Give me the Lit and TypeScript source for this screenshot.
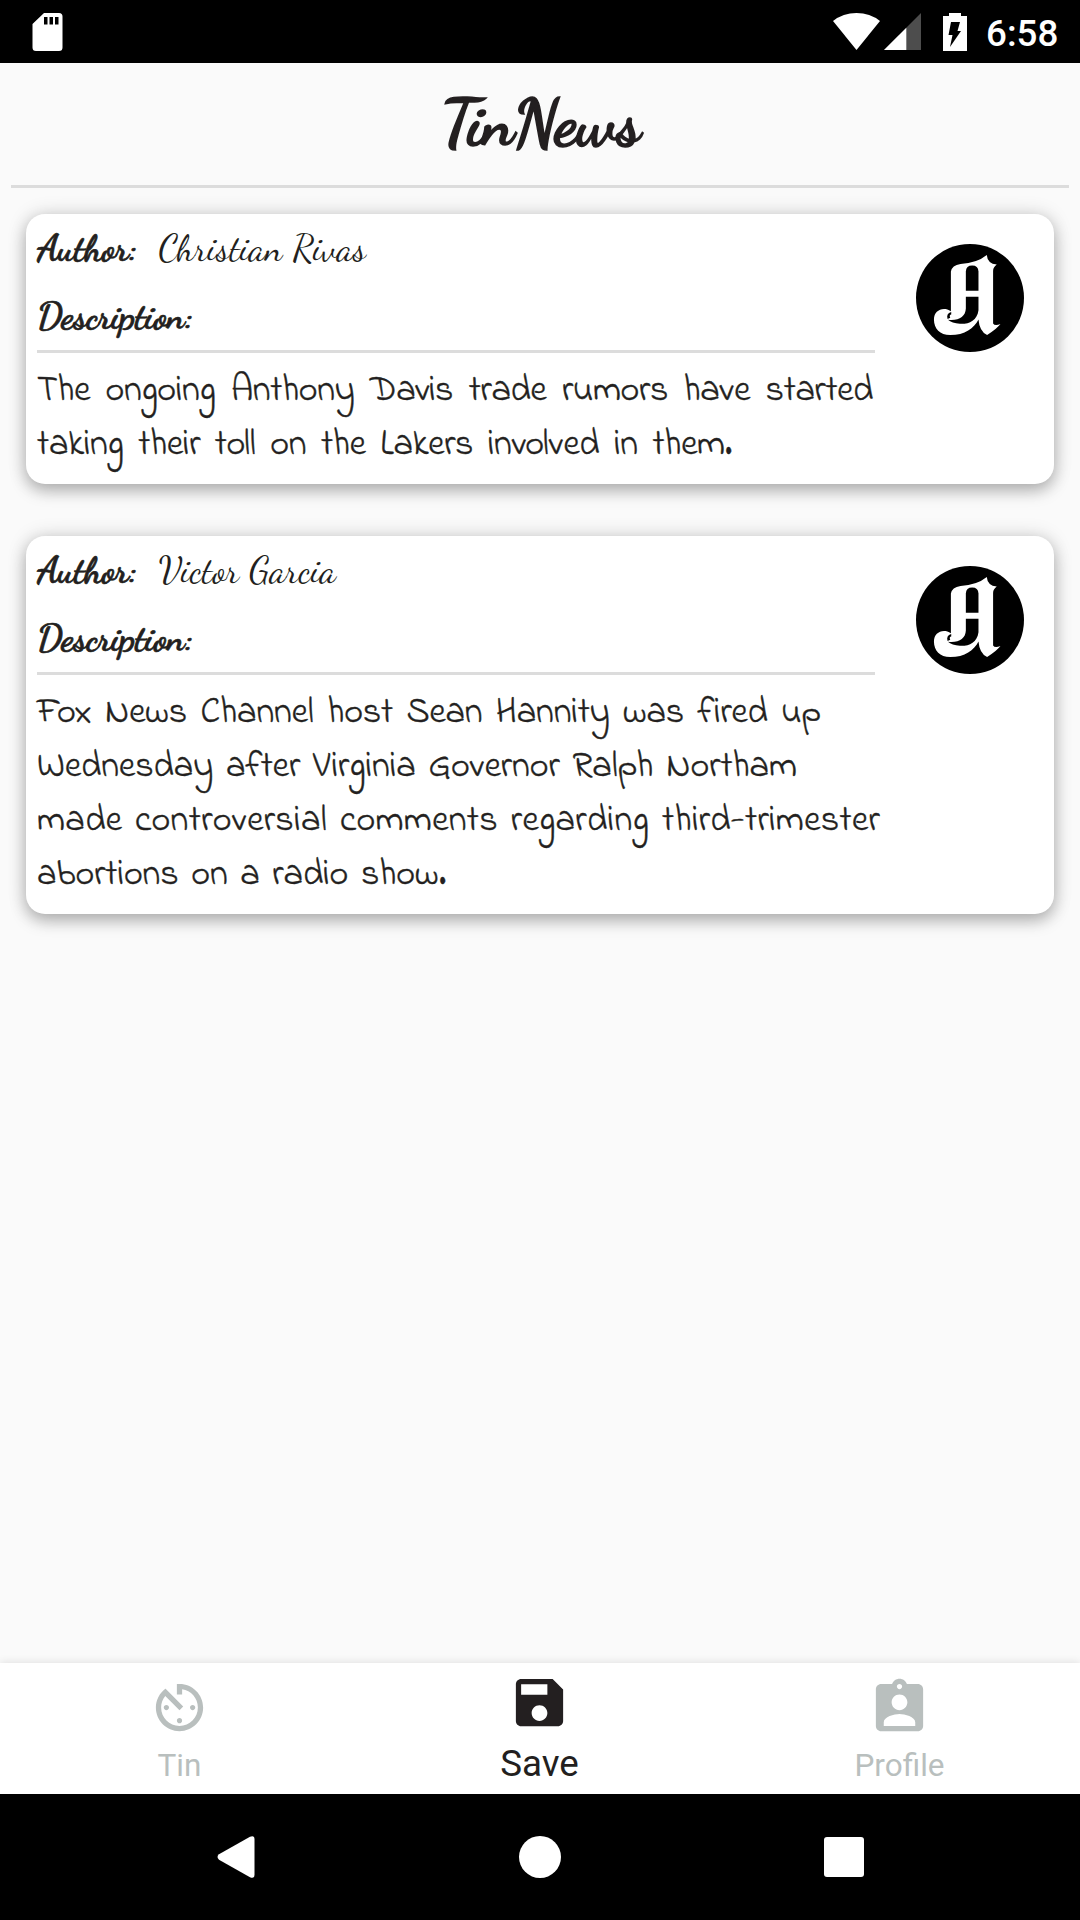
import { LitElement, html, svg, css } from "lit";
import { customElement, property } from "lit/decorators.js";
import { classMap } from "lit/directives/class-map.js";
import { styleMap } from "lit/directives/style-map.js";

interface Line {
  text: string;
  width: number;
  tracking: number;
}

interface Article {
  author: string;
  lines: Line[];
}

const articles: Article[] = [
  {
    author: "Christian Rivas",
    lines: [
      { text: "The ongoing Anthony Davis trade rumors have started", width: 836, tracking: -0.3 },
      { text: "taking their toll on the Lakers involved in them.", width: 695, tracking: -0.2 },
    ],
  },
  {
    author: "Victor Garcia",
    lines: [
      { text: "Fox News Channel host Sean Hannity was fired up", width: 784, tracking: -0.1 },
      { text: "Wednesday after Virginia Governor Ralph Northam", width: 760, tracking: 0 },
      { text: "made controversial comments regarding third-trimester", width: 843, tracking: 0.4 },
      { text: "abortions on a radio show.", width: 409, tracking: 0 },
    ],
  },
];

const timerIcon = svg`<path d="M11 17c0 .55.45 1 1 1s1-.45 1-1-.45-1-1-1-1 .45-1 1zm0-14v4h2V5.08c3.39.49 6 3.39 6 6.92 0 3.87-3.13 7-7 7s-7-3.13-7-7c0-1.68.59-3.22 1.58-4.42L12 13l1.41-1.41-6.8-6.8v.02C4.42 6.45 3 9.05 3 12c0 4.97 4.02 9 9 9 4.97 0 9-4.03 9-9s-4.03-9-9-9h-1zm7 9c0-.55-.45-1-1-1s-1 .45-1 1 .45 1 1 1 1-.45 1-1zM6 12c0 .55.45 1 1 1s1-.45 1-1-.45-1-1-1-1 .45-1 1z"/>`;
const saveIcon = svg`<path fill-rule="evenodd" d="M17 3H5c-1.11 0-2 .9-2 2v14c0 1.1.89 2 2 2h14c1.1 0 2-.9 2-2V7l-4-4zM12 19c-1.66 0-3-1.34-3-3s1.34-3 3-3 3 1.34 3 3-1.34 3-3 3zM15 9H5V5h10v4z"/>`;
const profileIcon = svg`<path d="M19 3h-4.18C14.4 1.84 13.3 1 12 1c-1.3 0-2.4.84-2.82 2H5c-1.1 0-2 .9-2 2v14c0 1.1.9 2 2 2h14c1.1 0 2-.9 2-2V5c0-1.1-.9-2-2-2zm-7 0c.55 0 1 .45 1 1s-.45 1-1 1-1-.45-1-1 .45-1 1-1zm0 4c1.66 0 3 1.34 3 3s-1.34 3-3 3-3-1.34-3-3 1.34-3 3-3zm6 12H6v-1.4c0-2 4-3.1 6-3.1s6 1.1 6 3.1V19z"/>`;

const tabs = [
  { label: "Tin", icon: timerIcon, active: false },
  { label: "Save", icon: saveIcon, active: true },
  { label: "Profile", icon: profileIcon, active: false },
];

@customElement("status-bar")
class StatusBar extends LitElement {
  static styles = css`
    :host {
      display: flex;
      align-items: center;
      height: 63px;
      padding: 0 23px 0 32px;
      background: #000;
      color: #fff;
      box-sizing: border-box;
      flex: none;
    }
    svg {
      display: block;
      flex: none;
    }
    .spacer {
      flex: 1;
    }
    .signal {
      margin-left: 4px;
    }
    .battery {
      margin: 0 19px 0 22px;
    }
    .clock {
      font: 500 36.75px/63px Roboto, sans-serif;
      padding-top: 3px;
      width: 71px;
      white-space: nowrap;
    }
  `;

  render() {
    return html`
      <svg width="31" height="38" viewBox="0 0 31 38">
        <path fill="#fff" fill-rule="evenodd" d="M12 0h15q3.500 0 3.500 3.500v31q0 3.500-3.500 3.500h-23q-3.500 0-3.500-3.500v-23.500zM12 4v7.500h3.500v-7.500zM17.500 4v7.500h3.500v-7.500zM23 4v7.500h3.500v-7.500z" />
      </svg>
      <div class="spacer"></div>
      <svg width="47" height="37" viewBox="0 0 47 37">
        <path fill="#fff" d="M0 8Q10 0 23.500 0T47 8L23.500 37z" />
      </svg>
      <svg class="signal" width="37" height="37" viewBox="0 0 37 37">
        <path fill="#4d4d4d" d="M37 0v37H0z" />
        <path fill="#fff" d="M22.300 14.700V37H0z" />
      </svg>
      <svg class="battery" width="24" height="38" viewBox="0 0 24 38">
        <path fill="#fff" d="M6 0h12v3h6v35H0V3h6z" />
        <path fill="#000" d="M8 9h9l-2.500 9H18L7 34l2.500-12H5.500z" />
      </svg>
      <div class="clock">6:58</div>
    `;
  }
}

@customElement("news-card")
class NewsCard extends LitElement {
  @property({ attribute: false }) article!: Article;

  static styles = css`
    :host {
      display: flex;
      justify-content: space-between;
      align-items: flex-start;
      box-sizing: border-box;
      padding: 0 30px 11px 11px;
      background: #fff;
      border-radius: 19px;
      box-shadow: 0 7px 16px rgba(0, 0, 0, 0.25), 0 0 20px rgba(0, 0, 0, 0.14);
    }
    .body {
      width: 838px;
    }
    .field {
      display: flex;
      font: 36.75px/68px "Dancing Script", "Liberation Serif", serif;
      white-space: nowrap;
    }
    .label {
      font-weight: 700;
      letter-spacing: -0.3px;
      -webkit-text-stroke: 0.7px currentColor;
    }
    .name {
      margin-left: 21px;
      letter-spacing: 0.2px;
    }
    .description {
      border-top: 3px solid #dcdcdc;
      padding-top: 12px;
      font: 400 36px/54px "Coming Soon", "Indie Flower", Lato, sans-serif;
      font-variant-ligatures: none;
      -webkit-text-stroke: 0.4px currentColor;
    }
    .line {
      display: block;
      white-space: nowrap;
      text-align-last: justify;
    }
    .badge {
      display: block;
      flex: none;
      margin-top: 30px;
    }
  `;

  render() {
    return html`
      <div class="body">
        <div class="field">
          <span class="label">Author:</span>
          <span class="name">${this.article.author}</span>
        </div>
        <div class="field"><span class="label">Description:</span></div>
        <div class="description">
          ${this.article.lines.map(
            (l) =>
              html`<span class="line" style=${styleMap({ width: `${l.width}px`, letterSpacing: `${l.tracking}px` })}
                >${l.text}</span
              >`
          )}
        </div>
      </div>
      <svg class="badge" width="108" height="108" viewBox="108 131 325 325">
        <circle cx="270.500" cy="293.500" r="162.500" fill="#000" />
        <path
          fill="#fff"
          d="M213 333V214Q216 195 242 191Q292 188 321 164Q323 190 351 193Q340 201 340 212V370Q345 379 362 372Q352 386 322 405Q299 394 296 358C283 384 255 405 211 405C180 405 162 385 162 358C162 332 188 318 213 333Z"
        />
        <path fill="#000" d="M258 272V214Q259 196 277 196T296 214V272Z" />
        <path fill="#000" d="M258 290H296V330C292 362 265 373 240 371Q216 370 204 359C236 363 257 350 258 325Z" />
        <path fill="#000" d="M214 336Q198 341 203 357L211 353Q207 344 214 343Z" />
      </svg>
    `;
  }
}

@customElement("tab-bar")
class TabBar extends LitElement {
  static styles = css`
    :host {
      display: grid;
      grid-template-columns: 360px 360px 360px;
      justify-content: center;
      height: 131px;
      background: #fff;
      box-shadow: 0 -1px 8px rgba(0, 0, 0, 0.1);
      flex: none;
    }
    .tab {
      display: flex;
      flex-direction: column;
      align-items: center;
      justify-content: space-between;
      box-sizing: border-box;
      padding: 13px 1px 8px 0;
      color: #b9bfbe;
      font: 400 31.5px/40px Roboto, sans-serif;
    }
    .tab.active {
      padding: 8px 1px 10px 0;
      color: #231f20;
      font-size: 36.75px;
    }
    .icon {
      width: 63px;
      height: 63px;
      fill: currentColor;
      display: block;
    }
  `;

  render() {
    return tabs.map(
      (t) => html`
        <div class=${classMap({ tab: true, active: t.active })}>
          <svg class="icon" viewBox="0 0 24 24">${t.icon}</svg>
          <span>${t.label}</span>
        </div>
      `
    );
  }
}

@customElement("system-nav")
class SystemNav extends LitElement {
  static styles = css`
    :host {
      display: flex;
      align-items: center;
      justify-content: space-between;
      height: 126px;
      box-sizing: border-box;
      padding: 0 216px 0 217px;
      background: #000;
      flex: none;
    }
    svg {
      display: block;
      fill: #fff;
    }
  `;

  render() {
    return html`
      <svg width="38" height="42" viewBox="0 0 38 42">
        <path d="M2 18.300L33 .800Q37.500-1 37.500 3.500v35Q37.500 43 33 41.200L2 23.700Q-1 21 2 18.300z" />
      </svg>
      <svg width="42" height="42" viewBox="0 0 42 42"><circle cx="21" cy="21" r="21" /></svg>
      <svg width="40" height="40" viewBox="0 0 40 40"><rect width="40" height="40" rx="3" /></svg>
    `;
  }
}

@customElement("app-root")
class AppRoot extends LitElement {
  static styles = css`
    :host {
      display: flex;
      flex-direction: column;
      width: 1080px;
      height: 1920px;
      overflow: hidden;
      background: #fafafa;
      color: #231f20;
    }
    .header {
      box-sizing: border-box;
      height: 125px;
      margin: 0 11px;
      border-bottom: 3px solid #dcdcdc;
      text-align: center;
      flex: none;
    }
    .title {
      margin: 0;
      font: 700 65.6px/121px "Dancing Script", "Liberation Serif", serif;
      letter-spacing: -0.8px;
      -webkit-text-stroke: 1.6px currentColor;
    }
    .feed {
      flex: 1;
      display: flex;
      flex-direction: column;
      gap: 52px;
      padding: 26px 26px 0;
    }
  `;

  render() {
    return html`
      <status-bar></status-bar>
      <header class="header"><h1 class="title">TinNews</h1></header>
      <main class="feed">${articles.map((a) => html`<news-card .article=${a}></news-card>`)}</main>
      <tab-bar></tab-bar>
      <system-nav></system-nav>
    `;
  }
}
